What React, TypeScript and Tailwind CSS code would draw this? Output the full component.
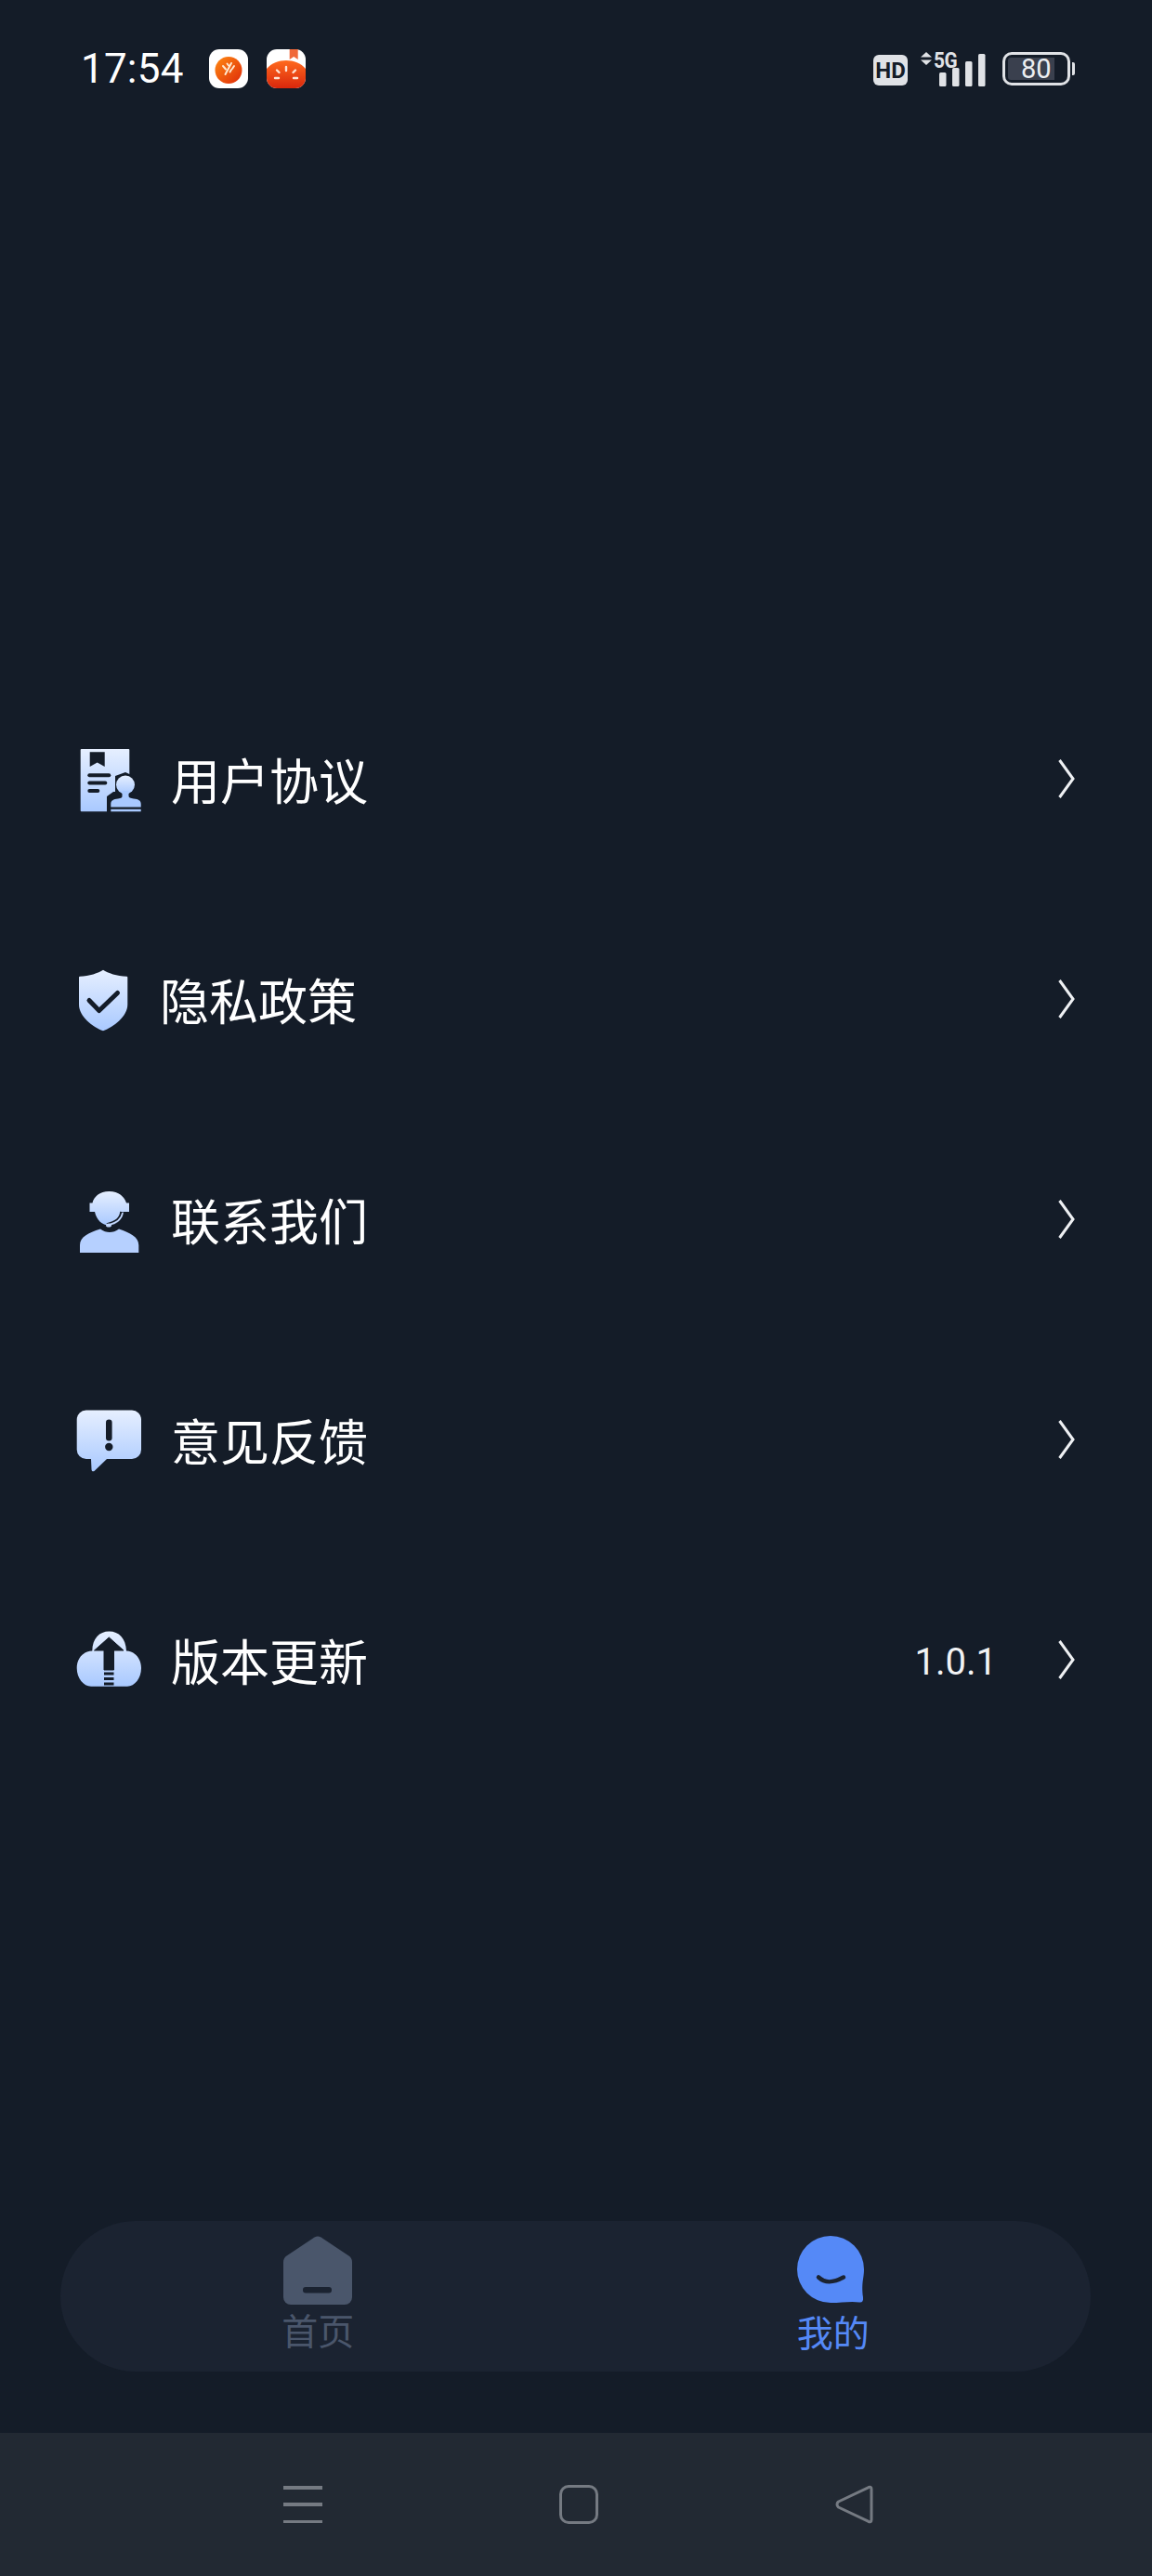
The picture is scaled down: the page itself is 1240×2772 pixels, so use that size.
import React from "react";

const CJK = "font-['Noto_Sans_CJK_SC','Noto_Sans',sans-serif]";
const DARK = "#141c28";

function Grad({ id }: { id: string }) {
  return (
    <defs>
      <linearGradient id={id} x1="0" y1="0" x2="0" y2="1">
        <stop offset="0" stopColor="#e6efff" />
        <stop offset="1" stopColor="#a9c9ff" />
      </linearGradient>
    </defs>
  );
}

function DocIcon() {
  return (
    <svg width="72" height="80" viewBox="0 0 72 80" className="shrink-0">
      <Grad id="g1" />
      <path d="M5.7 5H56.3a1 1 0 0 1 1 1V72.3H5.7a1 1 0 0 1-1-1V6a1 1 0 0 1 1-1Z" fill="url(#g1)" />
      <path d="M14.7 8.3H30.7V24L22.7 19.5 14.7 24Z" fill={DARK} />
      <rect x="12.3" y="31.3" width="25" height="4" rx="2" fill={DARK} />
      <rect x="12.3" y="39.5" width="21" height="4" rx="2" fill={DARK} />
      <rect x="12.3" y="48" width="13" height="4" rx="2" fill={DARK} />
      <path d="M33 76V56L40 51H42V34L53 30L66 36V50L72 56V76Z" fill={DARK} />
      <circle cx="53" cy="43.5" r="10" fill="url(#g1)" />
      <path d="M49.5 50H56.5V55.5C56.5 57.5 58.5 58 62 58.5C67 59 69.7 60.5 69.7 64V67.5H37.3V64C37.3 60.5 40 59 45 58.5C48.5 58 49.5 57.5 49.5 55.5Z" fill="#a9c9ff" />
      <rect x="37.3" y="69.8" width="32.4" height="2.5" fill="#a9c9ff" />
    </svg>
  );
}

function ShieldIcon() {
  return (
    <svg width="60" height="70" viewBox="0 0 60 70" className="shrink-0">
      <Grad id="g2" />
      <path d="M29 .7C24 4 14 7.5 4 7.8A1 1 0 0 0 3 8.8V38C3 51 18 62 29 66.3C40 62 55.3 51 55.3 38V8.8A1 1 0 0 0 54.3 7.8C44 7.5 34 4 29 .7Z" fill="url(#g2)" />
      <path d="M14 33.5 24.7 44.5 44.5 25.5" fill="none" stroke={DARK} strokeWidth="5" strokeLinecap="round" strokeLinejoin="round" />
    </svg>
  );
}

function ContactIcon() {
  return (
    <svg width="72" height="80" viewBox="0 0 72 80" className="shrink-0">
      <Grad id="g3" />
      <path d="M35.5 7C25 7 19 13 17.5 19.5H14.5V29H20C22 38 28 43.5 35.5 43.5C43 43.5 49 38 51 29H57V19.5H54C52 13 46 7 35.5 7Z" fill="url(#g3)" />
      <path d="M49 29C48.5 36 43 41 33 43" fill="none" stroke={DARK} strokeWidth="3.6" />
      <path d="M50 30C49 36 44 41 35 43" fill="none" stroke="#c3d8ff" strokeWidth="1.6" />
      <ellipse cx="35" cy="43.5" rx="3" ry="2" fill="#c3d8ff" />
      <path d="M4 73V65C4 56 13 51.5 26 47.5C29 50 33 51 36 51C39 51 43 50 46 47.5C58 51.5 67.3 56 67.3 65V73Z" fill="#b6d0ff" />
    </svg>
  );
}

function FeedbackIcon() {
  return (
    <svg width="72" height="80" viewBox="0 0 72 80" className="shrink-0">
      <Grad id="g4" />
      <path d="M10.7 5.6H60A10 10 0 0 1 70 15.6V48A10 10 0 0 1 60 58H33L20 70.5C18.5 72 16.5 71.5 16.5 69L16 58H10.7A10 10 0 0 1 .7 48V15.6A10 10 0 0 1 10.7 5.6Z" fill="url(#g4)" />
      <rect x="32" y="15.5" width="6.6" height="23" rx="3.3" fill={DARK} />
      <circle cx="35.3" cy="45" r="4.2" fill={DARK} />
    </svg>
  );
}

function UpdateIcon() {
  return (
    <svg width="72" height="80" viewBox="0 0 72 80" className="shrink-0">
      <Grad id="g5" />
      <path d="M35.5 6.4C25 6.4 17.5 14 17.3 27.5C7 28 .7 36 .7 46C.7 57 8 65.7 16 65.7H55C63 65.7 70 57 70 46C70 36 63.5 28 54 27.5C53.5 14 46 6.4 35.5 6.4Z" fill="url(#g5)" />
      <path d="M35.3 13 51 27H40.5V48H30V27H19.5Z" fill={DARK} stroke={DARK} strokeWidth="1" strokeLinejoin="round" />
      <rect x="30" y="50.5" width="10.5" height="3" fill={DARK} />
      <rect x="30" y="56" width="10.5" height="3" fill={DARK} />
      <rect x="30" y="61.5" width="10.5" height="3" fill={DARK} />
    </svg>
  );
}

function Chevron() {
  return (
    <svg width="18" height="44" viewBox="0 0 18 44" className="shrink-0 block">
      <path d="M1.5 2 16 22 1.5 42" fill="none" stroke="#eef0f3" strokeWidth="3" />
    </svg>
  );
}

function Row({ icon, label, value }: { icon: React.ReactNode; label: string; value?: string }) {
  return (
    <div className="flex items-center h-[237px] pl-[82px] pr-[83px]">
      {icon}
      <span className={`ml-[30px] mb-[6px] text-[53px] leading-[72px] text-white ${CJK}`}>{label}</span>
      {value && (
        <span className="ml-auto mr-[66px] text-[40px] leading-[48px] text-[#f2f3f5] font-['Roboto',sans-serif]">{value}</span>
      )}
      <span className={value ? "mb-[6px]" : "ml-auto mb-[6px]"}>
        <Chevron />
      </span>
    </div>
  );
}

function AppOne() {
  return (
    <svg width="42" height="42" viewBox="0 0 42 42">
      <defs>
        <linearGradient id="a1" x1="0" y1="0" x2="1" y2="1">
          <stop offset="0" stopColor="#ff8a12" />
          <stop offset="1" stopColor="#de2a0a" />
        </linearGradient>
      </defs>
      <rect width="42" height="42" rx="11" fill="#fff" />
      <circle cx="21" cy="22.5" r="14.5" fill="url(#a1)" />
      <path d="M15 18 18 21.5M19.5 15.5 21 17.5M24 15 17.5 27M27 18 25 21M24 22 22.5 24.5" stroke="#ffe9cf" strokeWidth="2" strokeLinecap="round" />
    </svg>
  );
}

function AppTwo() {
  return (
    <svg width="42" height="42" viewBox="0 0 42 42" className="block">
      <defs>
        <linearGradient id="a2" x1="0" y1="0" x2="0" y2="1">
          <stop offset="0" stopColor="#ff6a1e" />
          <stop offset="1" stopColor="#d9270c" />
        </linearGradient>
      </defs>
      <rect width="42" height="42" rx="11" fill="#fff" />
      <path d="M24.7 0H33.7V11L29.2 8 24.7 11Z" fill="#f0693a" />
      <path d="M0 21C5 15 13 12 21 12C29 12 37 15 42 21V31A11 11 0 0 1 31 42H11A11 11 0 0 1 0 31Z" fill="url(#a2)" />
      <path d="M21 19V23M11 22.5 13.5 25M31 22.5 28.5 25M9 31H13M29 31H33" stroke="#ffe3d3" strokeWidth="2.4" strokeLinecap="round" />
    </svg>
  );
}

function Signal() {
  return (
    <div className="relative w-[72px] h-[37px] ml-[14px]">
      <svg width="72" height="37" viewBox="0 0 72 37" className="absolute left-0 top-0">
        <path d="M6 0 12 5.5H0ZM6 14 0 8.5H12Z" fill="#e0e2e6" />
        <rect x="20" y="22" width="7.5" height="15" rx="1.5" fill="#e0e2e6" />
        <rect x="34" y="17" width="7.5" height="20" rx="1.5" fill="#e0e2e6" />
        <rect x="48" y="10" width="7.5" height="27" rx="1.5" fill="#e0e2e6" />
        <rect x="62" y="2" width="7.5" height="35" rx="1.5" fill="#e0e2e6" />
      </svg>
      <span className="absolute left-[14px] top-[-1px] text-[23px] leading-[22px] font-bold tracking-[-0.5px] text-[#e0e2e6] font-['Roboto',sans-serif] scale-x-90 origin-left">5G</span>
    </div>
  );
}

export default function App() {
  return (
    <div className="w-[1240px] h-[2772px] flex flex-col bg-[#141c28] overflow-hidden">
      <div className="flex items-center h-[148px] pl-[87px] pr-[83px]">
        <span className="text-[44px] leading-[52px] tracking-[0.2px] text-white font-['Roboto',sans-serif] w-[138px]">17:54</span>
        <AppOne />
        <span className="ml-[20px]"><AppTwo /></span>
        <div className="ml-auto flex items-center">
          <span className="w-[37px] h-[33px] rounded-[6px] bg-[#e0e2e6] flex items-center justify-center text-[24px] leading-[24px] font-bold text-[#141c28] font-['Roboto',sans-serif] mt-[3px]">HD</span>
          <Signal />
          <div className="flex items-center ml-[16px]">
            <div className="relative w-[73px] h-[36px] rounded-[10px] border-[3px] border-[#e0e2e6] p-[3px]">
              <div className="w-[50px] h-[24px] bg-[#3a404e] rounded-l-[3px]" />
              <span className="absolute left-[17px] top-[-2px] text-[29px] leading-[34px] text-[#eceef1] font-['Roboto',sans-serif] font-normal">80</span>
            </div>
            <div className="w-[3px] h-[14px] ml-[2px] bg-[#e0e2e6] rounded-r-[2px]" />
          </div>
        </div>
      </div>

      <div className="mt-[574px]">
        <Row icon={<DocIcon />} label="用户协议" />
        <Row icon={<ShieldIcon />} label="隐私政策" />
        <Row icon={<ContactIcon />} label="联系我们" />
        <Row icon={<FeedbackIcon />} label="意见反馈" />
        <Row icon={<UpdateIcon />} label="版本更新" value="1.0.1" />
      </div>

      <div className="mt-[483px] ml-[65px] w-[1109px] h-[162px] rounded-[81px] bg-[#1b2331] grid grid-cols-2">
        <div className="flex flex-col items-center pt-[16px]">
          <svg width="74" height="74" viewBox="0 0 74 74">
            <path d="M33.5 1.5Q37 -.5 40.5 1.5L70.5 21.5Q74 24 74 28V66A8 8 0 0 1 66 74H8A8 8 0 0 1 0 66V28Q0 24 3.5 21.5Z" fill="#4a566b" />
            <rect x="21" y="55" width="31" height="6.5" rx="3" fill="#1b2331" />
          </svg>
          <span className={`mt-[4px] text-[39px] leading-[44px] text-[#4a566b] ${CJK}`}>首页</span>
        </div>
        <div className="flex flex-col items-center pt-[16px]">
          <svg width="74" height="74" viewBox="0 0 74 74" className="mr-[3px]">
            <path d="M36 0A36 36 0 0 1 72 36C72 46 69 50 71 66C71.5 70 70 72 67 71.5C58 70 48 72 36 72A36 36 0 0 1 36 0Z" fill="#5589f7" />
            <path d="M23 44.5C30 51 38 51 50 44.5" fill="none" stroke="#1b2331" strokeWidth="4.5" strokeLinecap="round" />
          </svg>
          <span className={`mt-[6px] text-[39px] leading-[44px] text-[#5589f7] ${CJK}`}>我的</span>
        </div>
      </div>

      <div className="mt-[66px] h-[154px] bg-[#222933] flex items-start justify-center pt-[56px] pl-[6px] gap-[255px]">
        <div className="w-[42px] h-[42px] flex flex-col justify-between py-[1px]">
          <div className="h-[3.5px] bg-[#757a82]" />
          <div className="h-[3.5px] bg-[#757a82]" />
          <div className="h-[3.5px] bg-[#757a82]" />
        </div>
        <div className="w-[42px] h-[42px] rounded-[10px] border-[3px] border-[#757a82]" />
        <svg width="42" height="42" viewBox="0 0 42 42">
          <path d="M39 4.5C39 2.5 37.5 1.5 35.5 2.8L3.5 18C1.5 19.5 1.5 22.5 3.5 24L35.5 39.2C37.5 40.5 39 39.5 39 37.5Z" fill="none" stroke="#757a82" strokeWidth="3" strokeLinejoin="round" />
        </svg>
      </div>
    </div>
  );
}
